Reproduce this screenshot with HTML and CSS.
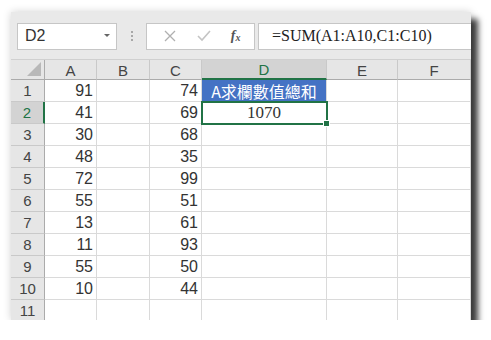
FILE: index.html
```html
<!DOCTYPE html>
<html lang="zh-Hant">
<head>
  <meta charset="UTF-8" />
  <title>SUM</title>
  <link rel="stylesheet" href="styles.css">
</head>
<body>
  <div class="window">
    <div class="toolbar">
      <div class="name-box">
        <span>D2</span>
        <span class="caret"></span>
      </div>
      <div class="grip"><i></i><i></i><i></i></div>
      <div class="fx-buttons">
        <svg width="14" height="14" viewBox="0 0 14 14"><path d="M2 2 L12 12 M12 2 L2 12" stroke="#b0b0b0" stroke-width="1.3" fill="none"/></svg>
        <svg width="16" height="14" viewBox="0 0 16 14"><path d="M2 7 L6 11 L14 2" stroke="#c4c4c4" stroke-width="1.6" fill="none"/></svg>
        <span class="fx">f<sub>x</sub></span>
      </div>
      <div class="formula">=SUM(A1:A10,C1:C10)</div>
    </div>

    <div class="sheet">
      <div class="hd corner"><span class="tri"></span></div>
      <div class="hd col">A</div>
      <div class="hd col">B</div>
      <div class="hd col">C</div>
      <div class="hd col sel">D</div>
      <div class="hd col">E</div>
      <div class="hd col">F</div>

      <div class="hd row">1</div><div class="c">91</div><div class="c"></div><div class="c">74</div><div class="c title">A求欄數值總和</div><div class="c"></div><div class="c"></div>
      <div class="hd row sel">2</div><div class="c">41</div><div class="c"></div><div class="c">69</div><div class="c active">1070<span class="handle"></span></div><div class="c"></div><div class="c"></div>
      <div class="hd row">3</div><div class="c">30</div><div class="c"></div><div class="c">68</div><div class="c"></div><div class="c"></div><div class="c"></div>
      <div class="hd row">4</div><div class="c">48</div><div class="c"></div><div class="c">35</div><div class="c"></div><div class="c"></div><div class="c"></div>
      <div class="hd row">5</div><div class="c">72</div><div class="c"></div><div class="c">99</div><div class="c"></div><div class="c"></div><div class="c"></div>
      <div class="hd row">6</div><div class="c">55</div><div class="c"></div><div class="c">51</div><div class="c"></div><div class="c"></div><div class="c"></div>
      <div class="hd row">7</div><div class="c">13</div><div class="c"></div><div class="c">61</div><div class="c"></div><div class="c"></div><div class="c"></div>
      <div class="hd row">8</div><div class="c">11</div><div class="c"></div><div class="c">93</div><div class="c"></div><div class="c"></div><div class="c"></div>
      <div class="hd row">9</div><div class="c">55</div><div class="c"></div><div class="c">50</div><div class="c"></div><div class="c"></div><div class="c"></div>
      <div class="hd row">10</div><div class="c">10</div><div class="c"></div><div class="c">44</div><div class="c"></div><div class="c"></div><div class="c"></div>
      <div class="hd row">11</div><div class="c"></div><div class="c"></div><div class="c"></div><div class="c"></div><div class="c"></div><div class="c"></div>
    </div>
  </div>
</body>
</html>
```

FILE: styles.css
```css
body {
  margin: 0;
  background: #ffffff;
  font-family: "Liberation Sans", "Noto Sans CJK TC", sans-serif;
}

.window {
  width: 460px;
  height: 308px;
  margin: 12px 0 0 11px;
  background: #e9e9e9;
  overflow: hidden;
  box-shadow: 0 0 8px rgba(0, 0, 0, 0.18), 7px 7px 6px rgba(0, 0, 0, 0.75);
}

.toolbar {
  display: flex;
  align-items: center;
  height: 48px;
  padding: 0 0 0 6px;
  box-sizing: border-box;
}

.name-box {
  display: flex;
  align-items: center;
  justify-content: space-between;
  width: 100px;
  height: 27px;
  box-sizing: border-box;
  padding: 0 6px 0 7px;
  background: #fff;
  border: 1px solid #c6c6c6;
  font-size: 16px;
  color: #333;
}

.caret {
  width: 0;
  height: 0;
  border-left: 3px solid transparent;
  border-right: 3px solid transparent;
  border-top: 3px solid #666;
  margin-top: -2px;
}

.grip {
  display: flex;
  flex-direction: column;
  gap: 2px;
  margin: 0 13px 0 14px;
}

.grip i {
  display: block;
  width: 2px;
  height: 2px;
  background: #a8a8a8;
}

.fx-buttons {
  display: flex;
  align-items: center;
  justify-content: space-around;
  width: 109px;
  height: 27px;
  box-sizing: border-box;
  padding: 0 4px 0 6px;
  background: #fff;
  border: 1px solid #c6c6c6;
}

.fx {
  font-family: "Liberation Serif", serif;
  font-style: italic;
  font-weight: bold;
  font-size: 14px;
  color: #555;
}

.fx sub {
  font-size: 10px;
  vertical-align: -1px;
}

.formula {
  flex: 1;
  height: 27px;
  margin-left: 3px;
  box-sizing: border-box;
  padding: 3px 0 0 13px;
  background: #fff;
  border: 1px solid #c6c6c6;
  border-right: none;
  font-family: "Liberation Serif", serif;
  font-size: 16px;
  color: #222;
}

.sheet {
  display: grid;
  grid-template-columns: 34px 52px 53px 52px 125px 71px 73px;
  grid-template-rows: 20px repeat(11, 22px);
  background: #fff;
  border-top: 1px solid #d0d0d0;
  margin-top: -1px;
}

.hd {
  display: flex;
  align-items: center;
  justify-content: center;
  background: #e6e6e6;
  color: #444;
  font-size: 15px;
  box-sizing: border-box;
}

.hd.col {
  border-right: 1px solid #c9c9c9;
  border-bottom: 1px solid #ababab;
  padding-top: 1px;
}

.hd.row {
  border-right: 1px solid #ababab;
  border-bottom: 1px solid #c9c9c9;
}

.hd.sel {
  background: #d3d3d3;
  color: #217346;
}

.hd.col.sel {
  border-bottom: 2px solid #217346;
}

.hd.row.sel {
  border-right: 2px solid #217346;
}

.corner {
  justify-content: flex-end;
  align-items: flex-end;
  border-right: 1px solid #ababab;
  border-bottom: 1px solid #ababab;
  padding: 0 3px 3px 0;
}

.tri {
  width: 0;
  height: 0;
  border-left: 14px solid transparent;
  border-bottom: 14px solid #b8b8b8;
}

.c {
  display: flex;
  align-items: center;
  justify-content: flex-end;
  padding: 1px 3px 0 0;
  box-sizing: border-box;
  border-right: 1px solid #dadada;
  border-bottom: 1px solid #dadada;
  font-size: 16px;
  color: #333;
}

.title {
  justify-content: center;
  padding: 0;
  background: #4472c4;
  color: #fff;
  font-family: "Noto Sans CJK TC", sans-serif;
  font-size: 16px;
}

.active {
  position: relative;
  justify-content: center;
  padding: 0;
  font-family: "Liberation Serif", serif;
  font-size: 17px;
  outline: 2px solid #217346;
  outline-offset: -1px;
}

.handle {
  position: absolute;
  right: -4px;
  bottom: -4px;
  width: 5px;
  height: 5px;
  background: #217346;
  border: 1px solid #fff;
}
```
